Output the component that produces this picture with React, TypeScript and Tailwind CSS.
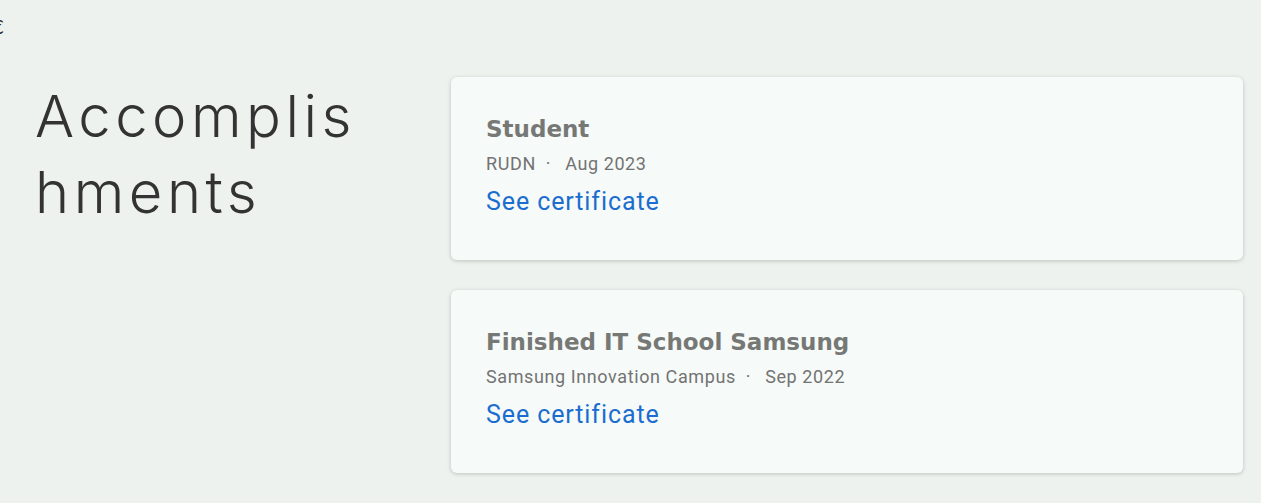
import React from "react";

const items = [
  { title: "Student", issuer: "RUDN", date: "Aug 2023" },
  { title: "Finished IT School Samsung", issuer: "Samsung Innovation Campus", date: "Sep 2022" },
];

const App = () => {
  return (
    <div className="relative min-h-screen w-full bg-[#eef2ef] overflow-hidden">
      {/* clipped glyph at the edge */}
      <span className="absolute left-[-8px] top-[13px] text-[19px] text-[#333] font-['DejaVu_Sans',sans-serif]">
        &#8364;
      </span>

      <div className="grid grid-cols-[416px_1fr] pl-[35px] pr-[18px] pt-[77px] pb-[30px]">
        {/* Section title */}
        <div>
          <h2 className="w-[350px] break-all pt-[1px] text-[58px] leading-[76px] text-[#333333] font-['Inter',sans-serif] font-light tracking-[4.5px]">
            Accomplishments
          </h2>
        </div>

        {/* Cards */}
        <div className="flex flex-col gap-[30px]">
          {items.map((item, index) => (
            <div
              key={index}
              className="h-[183px] rounded-[6px] bg-[#f6faf8] pl-[35px] pt-[38px] shadow-[0_1px_4px_rgba(0,0,0,0.2)]"
            >
              <div className="text-[23px] leading-[28px] font-bold text-[#767876] font-['DejaVu_Sans',sans-serif]">
                {item.title}
              </div>
              <div className="mt-[9px] text-[18px] leading-[24px] tracking-[0.6px] text-[#737373] font-['Roboto',sans-serif]">
                {item.issuer}
                <span className="ml-[10px] mr-[14px]">·</span>
                {item.date}
              </div>
              <a
                href="#"
                className="mt-[11px] block w-fit text-[25px] leading-[30px] tracking-[0.9px] text-[#1b6dcf] font-['Roboto',sans-serif]"
              >
                See certificate
              </a>
            </div>
          ))}
        </div>
      </div>
    </div>
  );
};

export default App;
